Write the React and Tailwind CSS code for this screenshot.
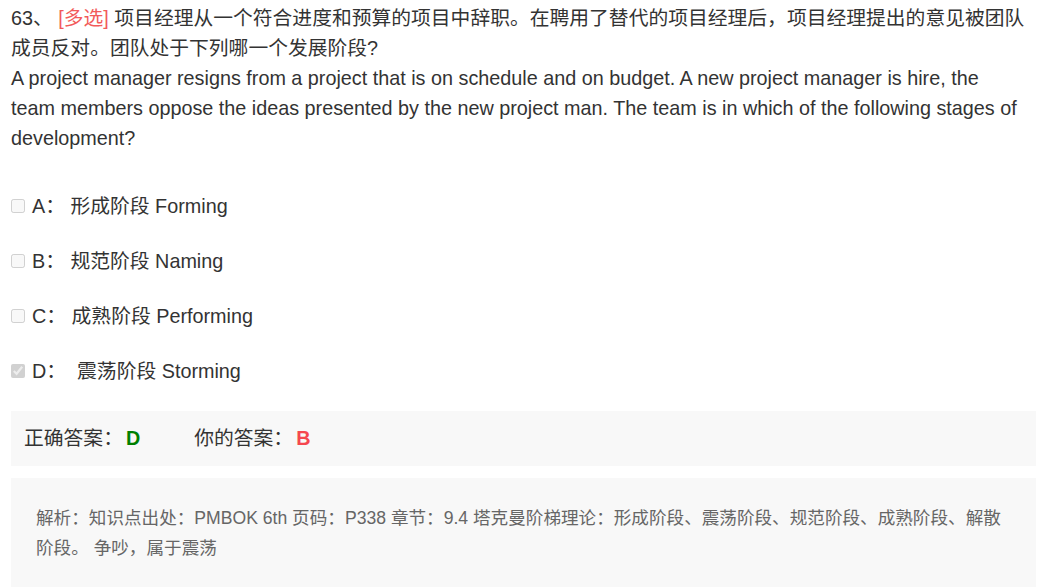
export default function App() {
  const options = [
    { key: 'A', text: '形成阶段 Forming', checked: false },
    { key: 'B', text: '规范阶段 Naming', checked: false },
    { key: 'C', text: '成熟阶段 Performing', checked: false },
    { key: 'D', text: '\u00a0震荡阶段 Storming', checked: true },
  ];

  return (
    <div
      className="min-h-screen bg-white text-[#333] pt-[3px]"
      style={{ fontFamily: '"Liberation Sans", Arial, "Noto Sans CJK SC", sans-serif' }}
    >
      <div className="ml-[11px] w-[1025px]">
        <div className="text-[19.8px] leading-[30px] whitespace-nowrap">
          <p>
            63、 <span className="text-[#f25a5a]">[多选]</span> 项目经理从一个符合进度和预算的项目中辞职。在聘用了替代的项目经理后，项目经理提出的意见被团队
            <br />
            成员反对。团队处于下列哪一个发展阶段?
          </p>
          <p>
            A project manager resigns from a project that is on schedule and on budget. A new project manager is hire, the
            <br />
            team members oppose the ideas presented by the new project man. The team is in which of the following stages of
            <br />
            development?
          </p>
        </div>

        <div className="mt-[38px] flex flex-col gap-[25px]">
          {options.map((o) => (
            <label key={o.key} className="flex items-center text-[19.8px] leading-[30px]">
              <input
                type="checkbox"
                disabled
                defaultChecked={o.checked}
                className="m-0 mr-[7px] w-[14px] h-[14px]"
              />
              <span>
                {o.key}：&nbsp;{o.text}
              </span>
            </label>
          ))}
        </div>

        <div className="mt-[25px] h-[55px] bg-[#f8f8f8] flex items-center px-[13px] text-[19.8px]">
          <span>正确答案：</span>
          <span className="font-bold text-[#008000] ml-[3px]">D</span>
          <span className="ml-[54px]">你的答案：</span>
          <span className="font-bold text-[#f5474f] ml-[3px]">B</span>
        </div>

        <div className="mt-[12px] bg-[#f8f8f8] px-[25px] pt-[25px] pb-[40px] text-[17.6px] leading-[30px] text-[#666]">
          解析：知识点出处：PMBOK 6th 页码：P338 章节：9.4 塔克曼阶梯理论：形成阶段、震荡阶段、规范阶段、成熟阶段、解散
          <br />
          阶段。 争吵，属于震荡
        </div>
      </div>
    </div>
  );
}
